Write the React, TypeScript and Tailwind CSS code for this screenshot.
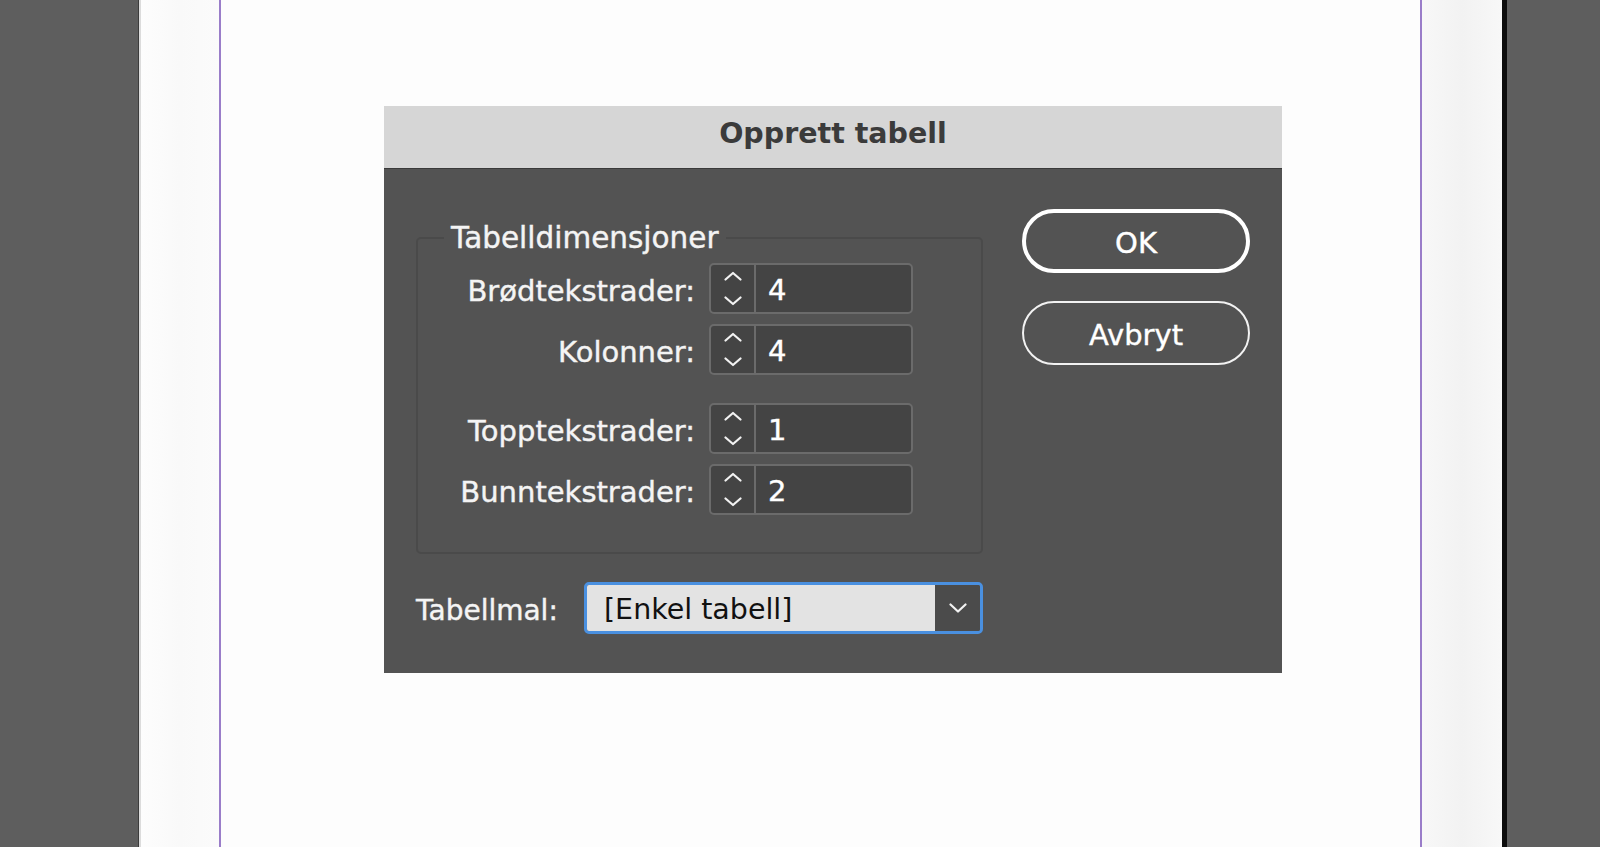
import React from 'react'

type SpinRow = {
  label: string
  value: string
}

const topRows: SpinRow[] = [
  { label: 'Brødtekstrader:', value: '4' },
  { label: 'Kolonner:', value: '4' },
]

const bottomRows: SpinRow[] = [
  { label: 'Topptekstrader:', value: '1' },
  { label: 'Bunntekstrader:', value: '2' },
]

function Spinner({ value }: { value: string }) {
  return (
    <div className="flex h-[51px] w-[204px] rounded-[5px] border-2 border-[#6b6b6b] bg-[#444444]">
      <div className="flex w-[45px] flex-col items-center justify-center gap-[15px] border-r-2 border-[#6b6b6b]">
        <svg width="20" height="10" viewBox="0 0 20 10" fill="none">
          <path d="M2.5 8.5 L10 2 L17.5 8.5" stroke="#f2f2f2" strokeWidth="2.2" strokeLinecap="round" strokeLinejoin="round" />
        </svg>
        <svg width="20" height="10" viewBox="0 0 20 10" fill="none">
          <path d="M2.5 1.5 L10 8 L17.5 1.5" stroke="#f2f2f2" strokeWidth="2.2" strokeLinecap="round" strokeLinejoin="round" />
        </svg>
      </div>
      <div className="flex items-center pl-[12px] pt-[5px] text-[29px] text-white [-webkit-text-stroke:0.4px_#ffffff]">
        {value}
      </div>
    </div>
  )
}

function Row({ label, value }: SpinRow) {
  return (
    <div className="flex items-center">
      <div className="w-[291px] pr-[14px] pt-[5px] text-right text-[29px] leading-none text-[#f4f4f4] [-webkit-text-stroke:0.4px_#f4f4f4]">
        {label}
      </div>
      <Spinner value={value} />
    </div>
  )
}

export default function App() {
  return (
    <div
      className="flex h-[847px] w-[1600px] overflow-hidden bg-[#5e5e5e]"
      style={{ fontFamily: '"DejaVu Sans", Verdana, sans-serif' }}
    >
      {/* pasteboard left */}
      <div className="w-[138px] shrink-0 bg-[#5e5e5e]" />
      <div className="w-[1px] shrink-0 bg-[#3c3c3c]" />
      <div className="w-[2px] shrink-0 bg-[#dcdcdc]" />

      {/* page */}
      <div className="flex flex-1 bg-[#fdfdfd]">
        <div className="w-[78px] shrink-0 bg-gradient-to-r from-[#fdfdfd] via-[#f9f9f9] to-[#fbfbfb]" />
        <div className="w-[2px] shrink-0 bg-[#9a7dc9]" />

        <div className="w-[1199px] shrink-0 pl-[163px] pt-[106px]">
          {/* dialog */}
          <div className="flex h-[567px] w-[898px] flex-col bg-[#535353]">
            <div className="flex h-[63px] shrink-0 items-center justify-center border-b border-[#3a3a3a] bg-[#d6d6d6] pb-[6px]">
              <span className="text-[28.5px] font-bold text-[#3b3b3b]">Opprett tabell</span>
            </div>

            <div className="flex flex-1 flex-col px-[32px] pt-[40px]">
              <div className="flex justify-between">
                {/* group box */}
                <div className="relative mt-[28px] h-[317px] w-[567px] rounded-[5px] border-2 border-[#4a4a4a] pt-[24px]">
                  <span className="absolute -top-[19px] left-[26px] bg-[#535353] px-[7px] text-[29.5px] leading-[36px] text-[#f4f4f4] [-webkit-text-stroke:0.4px_#f4f4f4]">
                    Tabelldimensjoner
                  </span>
                  <div className="flex flex-col gap-[10px]">
                    {topRows.map((r) => (
                      <Row key={r.label} {...r} />
                    ))}
                  </div>
                  <div className="mt-[28px] flex flex-col gap-[10px]">
                    {bottomRows.map((r) => (
                      <Row key={r.label} {...r} />
                    ))}
                  </div>
                </div>

                {/* buttons */}
                <div className="flex w-[228px] flex-col gap-[28px]">
                  <button
                    type="button"
                    className="flex h-[64px] items-center justify-center rounded-full border-[4px] border-white pt-[5px] text-[29px] text-white [-webkit-text-stroke:0.4px_#ffffff]"
                  >
                    OK
                  </button>
                  <button
                    type="button"
                    className="flex h-[64px] items-center justify-center rounded-full border-2 border-[#f2f2f2] pt-[5px] text-[29px] text-white [-webkit-text-stroke:0.4px_#ffffff]"
                  >
                    Avbryt
                  </button>
                </div>
              </div>

              {/* table style */}
              <div className="mt-[28px] flex items-center">
                <span className="w-[168px] pt-[5px] text-[28px] text-[#f4f4f4] [-webkit-text-stroke:0.4px_#f4f4f4]">
                  Tabellmal:
                </span>
                <div className="flex h-[52px] w-[399px] overflow-hidden rounded-[5px] border-[3px] border-[#4a90e0]">
                  <div className="flex flex-1 items-center bg-[#e3e3e3] pl-[17px] pt-[4px] text-[28.5px] text-[#111111]">
                    [Enkel tabell]
                  </div>
                  <div className="flex w-[45px] items-center justify-center bg-[#4b4b4b]">
                    <svg width="18" height="10" viewBox="0 0 18 10" fill="none">
                      <path d="M1.5 1.5 L9 8.5 L16.5 1.5" stroke="#f2f2f2" strokeWidth="2.2" strokeLinecap="round" strokeLinejoin="round" />
                    </svg>
                  </div>
                </div>
              </div>
            </div>
          </div>
        </div>

        <div className="w-[2px] shrink-0 bg-[#9a7dc9]" />
        <div className="w-[80px] shrink-0 bg-gradient-to-r from-[#f8f8f8] via-[#f2f2f2] to-[#f8f8f8]" />
      </div>

      {/* pasteboard right */}
      <div className="w-[5px] shrink-0 bg-[#0c0c0c]" />
      <div className="w-[93px] shrink-0 bg-[#5e5e5e]" />
    </div>
  )
}
